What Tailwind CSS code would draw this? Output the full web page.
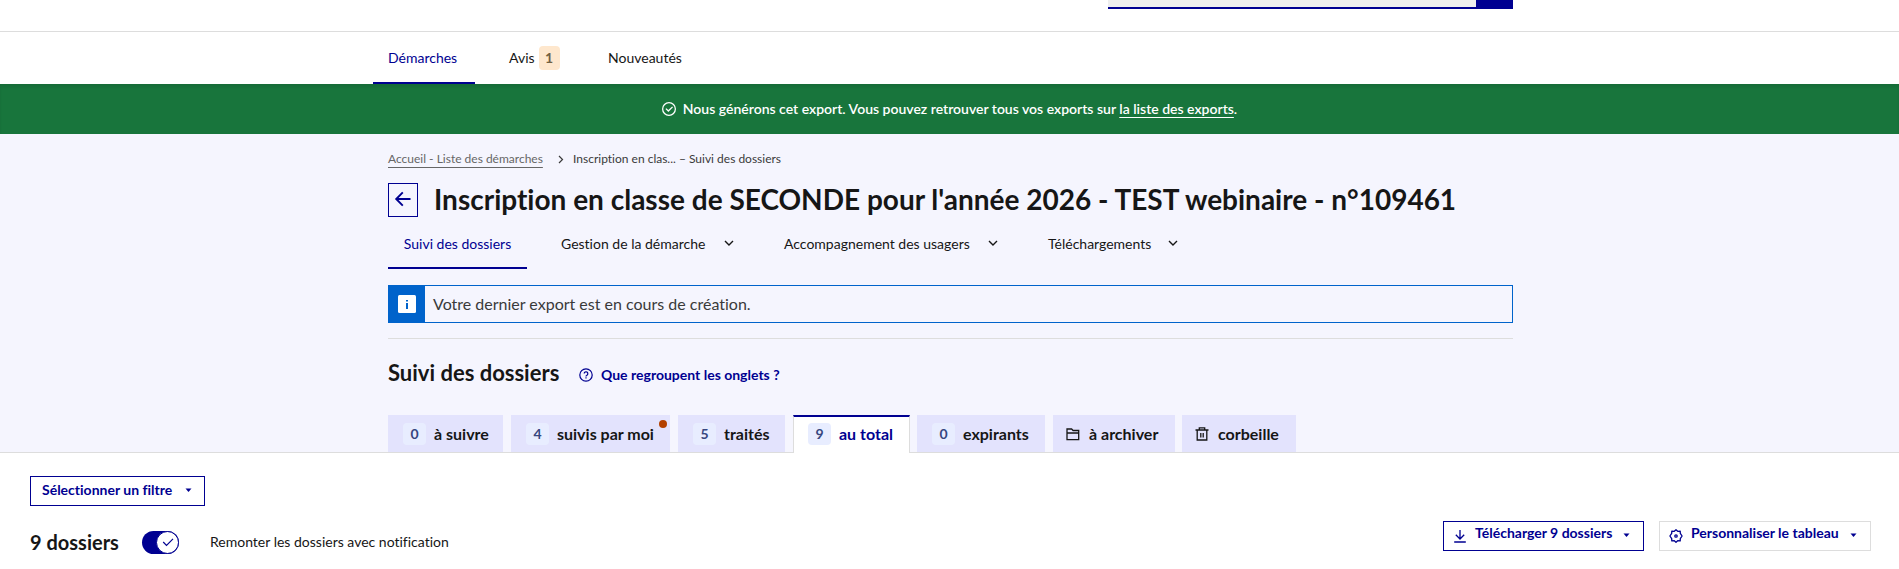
<!DOCTYPE html>
<html lang="fr">
<head>
<meta charset="utf-8">
<meta name="viewport" content="width=device-width, initial-scale=1">
<title>Suivi des dossiers</title>
<script src="https://cdn.jsdelivr.net/npm/@tailwindcss/browser@4"></script>
</head>
<body class="min-h-screen bg-white font-['Lato','Noto_Sans',sans-serif] text-sm leading-6 text-[#161616] [font-variant-ligatures:none]">

<header class="border-b border-[#dddddd]">
  <div class="mx-auto flex h-[31px] max-w-[1127px] items-start justify-end">
    <form class="flex w-[405px]">
      <input type="search" aria-label="Rechercher un dossier" class="h-[9px] min-w-0 flex-1 border-b-2 border-[#000091] bg-[#eeeeee] outline-none">
      <button type="button" aria-label="Rechercher" class="h-[9px] w-[37px] bg-[#000091]"></button>
    </form>
  </div>
</header>

<nav aria-label="Menu principal" class="mx-auto flex h-[52px] max-w-[1153px] text-sm">
  <a href="#" aria-current="page" class="flex w-[102px] items-center border-b-2 border-[#000091] pt-0.5 pl-[15px] text-[#000091]">Démarches</a>
  <a href="#" class="ml-5 flex w-[82px] items-center gap-1 pl-3.5">Avis <span class="flex h-6 w-[21px] items-center justify-center rounded bg-[#fee7cd] font-bold text-[#716043]">1</span></a>
  <a href="#" class="ml-4 flex items-center px-[15px]">Nouveautés</a>
</nav>

<div role="status" class="flex h-[50px] items-center justify-center gap-[7px] bg-[#18753c] text-sm font-semibold text-white shadow-[inset_0_3px_3px_rgba(0,0,0,0.08)]">
  <svg class="size-[14px]" viewBox="0 0 24 24" fill="currentColor" aria-hidden="true"><path d="M12 0a12 12 0 1 1 0 24 12 12 0 0 1 0-24Zm0 2.200a9.800 9.800 0 1 0 0 19.600 9.800 9.800 0 0 0 0-19.600Zm5.300 5.300 1.600 1.600-8 8-5-5 1.600-1.600 3.400 3.400 6.400-6.400Z"/></svg>
  <p>Nous générons cet export. Vous pouvez retrouver tous vos exports sur <a href="#" class="underline underline-offset-3">la liste des exports</a>.</p>
</div>

<main>
  <section class="border-b border-[#dddddd] bg-[#f5f5fe]">
    <div class="mx-auto max-w-[1127px] pl-0.5">
      <nav aria-label="Fil d’Ariane" class="flex h-[49px] items-center text-xs text-[#3a3a3a]">
        <a href="#" class="w-[159px] whitespace-nowrap text-[#666666] underline underline-offset-4">Accueil - Liste des démarches</a>
        <svg class="mr-1 ml-[6px] size-4 text-[#3a3a3a]" viewBox="0 0 16 16" fill="none" stroke="currentColor" stroke-width="1.200" aria-hidden="true"><path d="m6 5 3.500 3.500L6 12"/></svg>
        <span>Inscription en clas... – Suivi des dossiers</span>
      </nav>

      <div class="flex items-start gap-4">
        <a href="#" aria-label="Retour" class="flex h-[34px] w-[30px] shrink-0 items-center justify-center border border-[#000091] text-[#000091]">
          <svg class="size-5" viewBox="0 0 20 20" fill="none" stroke="currentColor" stroke-width="1.900" aria-hidden="true"><path d="M17.500 9H4M9.800 2.300 3.200 9l6.600 6.700"/></svg>
        </a>
        <h1 class="text-[28px] leading-8 font-bold whitespace-nowrap">Inscription en classe de SECONDE pour l'année 2026 - TEST webinaire - n°109461</h1>
      </div>

      <nav aria-label="Menu de la démarche" class="flex h-[52px]">
        <a href="#" aria-current="page" class="w-[139px] border-b-2 border-[#000091] pt-[15px] text-center text-[#000091]">Suivi des dossiers</a>
        <button type="button" class="ml-5 flex w-[203px] justify-between px-3.5 pt-[15px] whitespace-nowrap">Gestion de la démarche
          <svg class="mt-1 size-[14px]" viewBox="0 0 14 14" fill="none" stroke="currentColor" stroke-width="1.400" aria-hidden="true"><path d="m3 5 4 4 4-4"/></svg></button>
        <button type="button" class="ml-5 flex w-[244px] justify-between px-3.5 pt-[15px] whitespace-nowrap">Accompagnement des usagers
          <svg class="mt-1 size-[14px]" viewBox="0 0 14 14" fill="none" stroke="currentColor" stroke-width="1.400" aria-hidden="true"><path d="m3 5 4 4 4-4"/></svg></button>
        <button type="button" class="ml-5 flex w-[160px] justify-between px-3.5 pt-[15px] whitespace-nowrap">Téléchargements
          <svg class="mt-1 size-[14px]" viewBox="0 0 14 14" fill="none" stroke="currentColor" stroke-width="1.400" aria-hidden="true"><path d="m3 5 4 4 4-4"/></svg></button>
      </nav>

      <div class="mt-4 flex h-[38px] items-stretch border border-[#0063cb]">
        <span class="flex w-9 items-center justify-center bg-[#0063cb]">
          <svg class="size-[18px]" viewBox="0 0 18 18" aria-hidden="true"><rect width="18" height="18" rx="1.500" fill="#fff"/><path d="M8 5h2v1.500H8zM8 8h2v6H8z" fill="#0063cb"/></svg>
        </span>
        <p class="self-center pl-2 text-base text-[#3a3a3a]">Votre dernier export est en cours de création.</p>
      </div>

      <hr class="mt-[15px] border-[#dddddd]">

      <div class="mt-[18px] flex h-8 items-center">
        <h2 class="w-[191px] text-[22px] font-bold whitespace-nowrap">Suivi des dossiers</h2>
        <button type="button" class="flex items-center gap-2 pt-1 font-bold text-[#000091]">
          <svg class="size-[14px]" viewBox="0 0 14 14" fill="none" stroke="currentColor" stroke-width="1.200" aria-hidden="true"><circle cx="7" cy="7" r="6.200"/><path d="M5.200 5.600a1.800 1.800 0 1 1 2.700 1.600c-.6.300-.9.600-.9 1.200M7 9.300v1.300"/></svg>
          Que regroupent les onglets ?</button>
      </div>

      <div role="tablist" class="mt-[26px] flex h-[37px] items-stretch gap-2 text-base font-bold whitespace-nowrap">
        <a href="#" role="tab" class="flex w-[115px] items-center gap-2 bg-[#e3e3fd] pl-[15px]"><span class="flex h-[22px] w-[23px] items-center justify-center rounded bg-[#e8edff] text-sm text-[#37477f]">0</span>à suivre</a>
        <a href="#" role="tab" class="relative flex w-[159px] items-center gap-2 bg-[#e3e3fd] pl-[15px]"><span class="flex h-[22px] w-[23px] items-center justify-center rounded bg-[#e8edff] text-sm text-[#37477f]">4</span>suivis par moi<span class="absolute top-[5px] right-[3px] size-2 rounded-full bg-[#b34000]"></span></a>
        <a href="#" role="tab" class="flex w-[107px] items-center gap-2 bg-[#e3e3fd] pl-[15px]"><span class="flex h-[22px] w-[23px] items-center justify-center rounded bg-[#e8edff] text-sm text-[#37477f]">5</span>traités</a>
        <a href="#" role="tab" aria-selected="true" class="-mb-px flex w-[117px] items-center gap-2 border-x border-t-2 border-x-[#dddddd] border-t-[#000091] bg-white pb-0.5 pl-3.5 text-[#000091]"><span class="flex h-[22px] w-[23px] items-center justify-center rounded bg-[#e8edff] text-sm text-[#37477f]">9</span>au total</a>
        <a href="#" role="tab" class="-ml-px flex w-[128px] items-center gap-2 bg-[#e3e3fd] pl-[15px]"><span class="flex h-[22px] w-[23px] items-center justify-center rounded bg-[#e8edff] text-sm text-[#37477f]">0</span>expirants</a>
        <a href="#" role="tab" class="flex w-[122px] items-center gap-2 bg-[#e3e3fd] pl-3">
          <svg class="size-4" viewBox="0 0 16 16" fill="none" stroke="currentColor" stroke-width="1.300" aria-hidden="true"><path d="M2 13.600V3h4.600l1.500 1.500h5.600v9.100zM2 7h11.700"/></svg>à archiver</a>
        <a href="#" role="tab" class="-ml-px flex w-[114px] items-center gap-2 bg-[#e3e3fd] pl-3">
          <svg class="size-4" viewBox="0 0 16 16" fill="none" stroke="currentColor" stroke-width="1.300" aria-hidden="true"><path d="M1.500 4h13M5.300 4V1.800h5.400V4M3.200 4v10h9.600V4M6.800 7v4.500M9.200 7v4.500"/></svg>corbeille</a>
      </div>
    </div>
  </section>

  <section class="pt-[23px] pr-7 pl-[30px]">
    <button type="button" class="flex h-[30px] w-[175px] items-start justify-between border border-[#000091] pt-px pr-3 pl-[11px] font-bold text-[#000091]">Sélectionner un filtre
      <svg class="mt-[9px] size-[7px]" viewBox="0 0 7 7" fill="currentColor" aria-hidden="true"><path d="M.5 1.500h6L3.500 5z"/></svg></button>

    <div class="mt-[15px] flex items-start justify-between text-sm">
      <div class="flex h-[42px] items-center">
        <h2 class="w-28 text-xl font-bold">9 dossiers</h2>
        <label class="flex cursor-pointer items-center">
          <input type="checkbox" checked class="peer sr-only">
          <span class="flex h-[23px] w-[37px] items-center justify-end rounded-full bg-[#000091]">
            <span class="flex size-[23px] items-center justify-center rounded-full border border-[#000091] bg-white text-[#000091]">
              <svg class="size-3" viewBox="0 0 12 12" fill="none" stroke="currentColor" stroke-width="1.200" aria-hidden="true"><path d="m1.200 6 3.300 3.300 6.500-6.500"/></svg>
            </span>
          </span>
          <span class="pl-[31px]">Remonter les dossiers avec notification</span>
        </label>
      </div>
      <div class="flex gap-[15px] font-bold text-[#000091]">
        <button type="button" class="flex h-[30px] w-[201px] items-start border border-[#000091] px-[9px] pt-px whitespace-nowrap">
          <svg class="mt-1.5 mr-2 size-[14px]" viewBox="0 0 14 14" fill="none" stroke="currentColor" stroke-width="1.300" aria-hidden="true"><path d="M1.200 13h11.600M7 1v9M2.800 5.800 7 10l4.200-4.200"/></svg>
          <span class="flex-1 text-left">Télécharger 9 dossiers</span>
          <svg class="mt-[9px] mr-1 size-[7px]" viewBox="0 0 7 7" fill="currentColor" aria-hidden="true"><path d="M.5 1.500h6L3.500 5z"/></svg></button>
        <button type="button" class="flex h-[30px] w-[212px] items-start border border-[#dddddd] px-[9px] pt-px whitespace-nowrap">
          <svg class="mt-1.5 mr-2 size-[14px]" viewBox="0 0 14 14" fill="none" stroke="currentColor" stroke-width="1.300" stroke-linejoin="round" aria-hidden="true"><path d="M5.300 2.300 7 .8l1.700 1.500 2.500-.2.100 2.300L13.100 7l-1.800 2.600-.1 2.300-2.500-.2L7 13.200l-1.700-1.500-2.500.2-.1-2.300L.9 7l1.800-2.600.1-2.300z"/><circle cx="7" cy="7" r="1.200"/></svg>
          <span class="flex-1 text-left">Personnaliser le tableau</span>
          <svg class="mt-[9px] mr-1 size-[7px]" viewBox="0 0 7 7" fill="currentColor" aria-hidden="true"><path d="M.5 1.500h6L3.500 5z"/></svg></button>
      </div>
    </div>
  </section>
</main>
</body>
</html>
